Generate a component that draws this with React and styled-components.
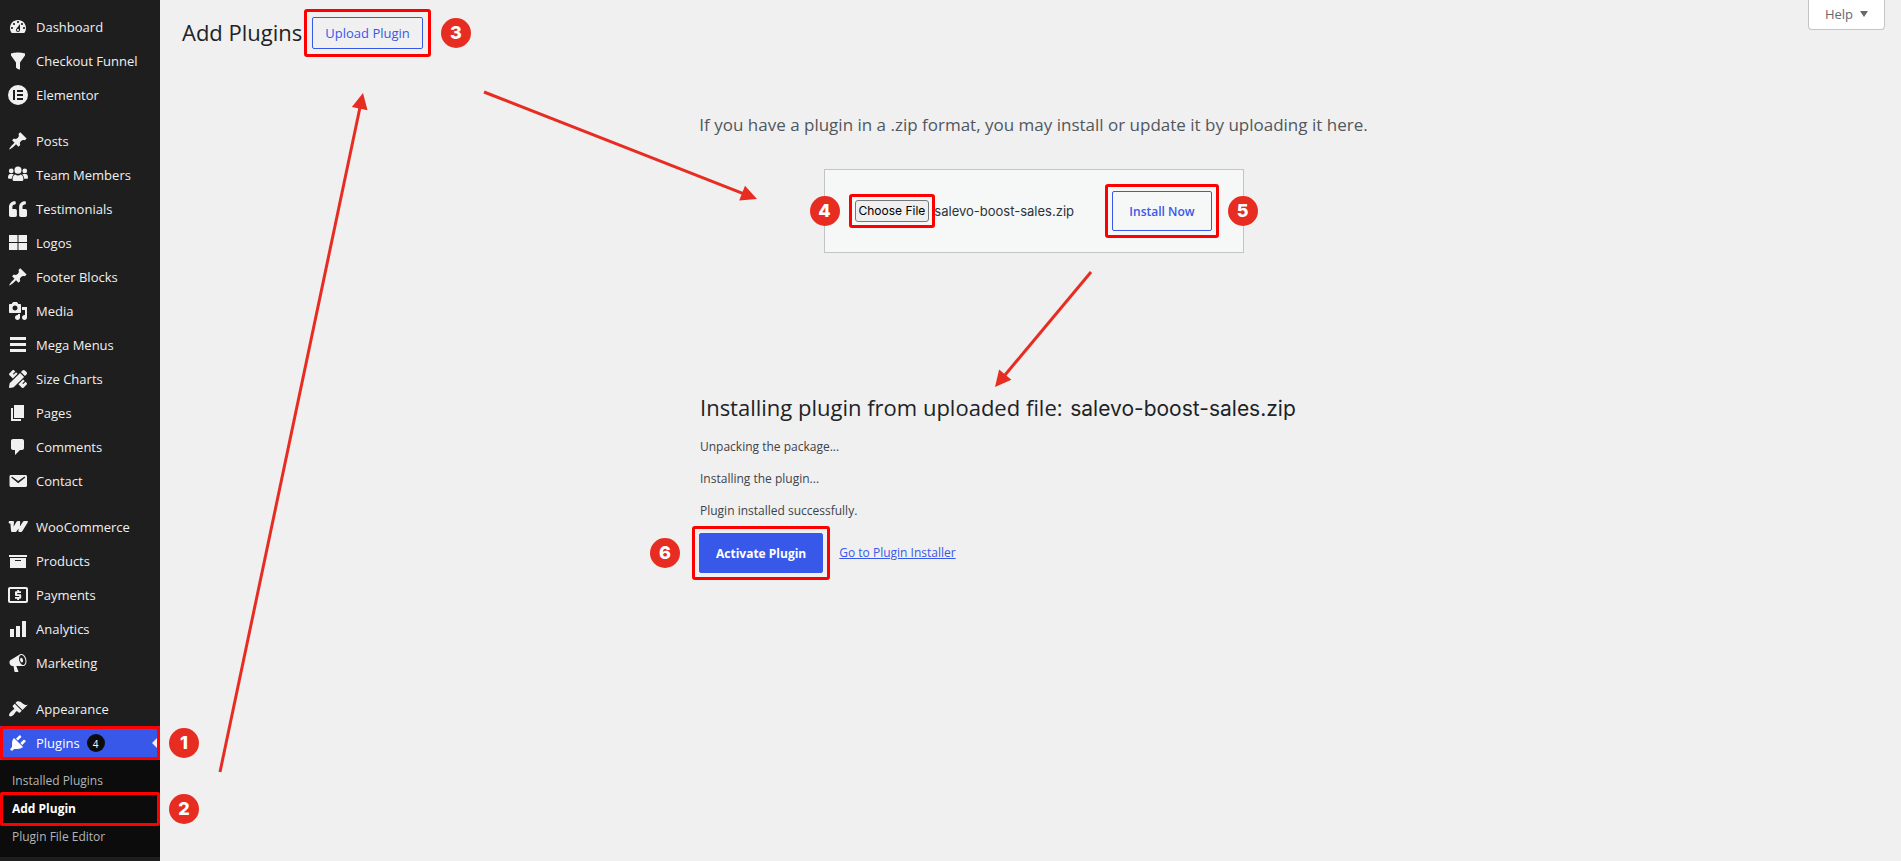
import React from "react";
import styled, { createGlobalStyle, css } from "styled-components";
import { FaQuoteLeft, FaPencilRuler } from "react-icons/fa";

const SANS = '"Open Sans", "Noto Sans", sans-serif';
const GEO = 'Inter, "Liberation Sans", sans-serif';
const BLUE = "#3858e9";
const RED = "#fe0000";
const MARK = "#e72d22";

const GlobalStyle = createGlobalStyle`
  * { box-sizing: border-box; }
  body {
    margin: 0;
    background: #f0f0f0;
    color: #3c434a;
    font: 12px/20px ${SANS};
  }
  a { color: ${BLUE}; }
`;

const Shell = styled.div`
  position: relative;
  display: flex;
  min-height: 100vh;
`;

const Sidebar = styled.nav`
  flex: 0 0 160px;
  background: #1e1e1e;
  padding-top: 10px;
`;

const MenuList = styled.ul`
  list-style: none;
  margin: 0;
  padding: 0;
`;

const MenuGroup = styled(MenuList)`
  & + & {
    margin-top: 12px;
  }
`;

const MenuLink = styled.a`
  position: relative;
  display: flex;
  align-items: center;
  height: 34px;
  color: ${(p) => (p.$active ? "#fff" : "#f0f0f1")};
  background: ${(p) => (p.$active ? BLUE : "transparent")};
  font-size: 13px;
  font-weight: 500;
  text-decoration: none;
`;

const IconBox = styled.span`
  display: flex;
  justify-content: center;
  width: 36px;
  svg {
    width: 20px;
    height: 20px;
    fill: currentColor;
  }
  svg[data-small] {
    width: 18px;
    height: 18px;
  }
`;

const Count = styled.span`
  display: grid;
  place-items: center;
  width: 18px;
  height: 18px;
  margin-left: 7px;
  border-radius: 50%;
  background: #0c0c0c;
  font-size: 10px;
`;

const Pointer = styled.span`
  position: absolute;
  right: 0;
  border: 8px solid transparent;
  border-right-color: #f0f0f0;
`;

const SubMenu = styled(MenuList)`
  padding: 7px 0 6px;
  background: #0c0c0c;
`;

const SubLink = styled.a`
  position: relative;
  display: flex;
  align-items: center;
  height: 28px;
  padding-left: 12px;
  color: ${(p) => (p.$current ? "#fff" : "#b5b5b5")};
  font-weight: ${(p) => (p.$current ? 700 : 400)};
  text-decoration: none;
`;

const Outline = styled.span`
  position: absolute;
  inset: ${(p) => (p.$bleed ? "-3px 0" : "0")};
  border: 3px solid ${RED};
  border-radius: 2px;
`;

const badgeSpot = {
  row: css`left: 169px;`,
  left: css`left: -15px;`,
  right: css`right: -15px;`,
  before: css`left: -45px;`,
  after: css`right: -43px;`,
};

const Badge = styled.span`
  position: absolute;
  top: 50%;
  ${(p) => badgeSpot[p.$spot]}
  display: grid;
  place-items: center;
  width: 30px;
  height: 30px;
  margin-top: -15px;
  border-radius: 50%;
  background: ${MARK};
  color: #fff;
  font: 800 18px/30px ${GEO};
`;

const Main = styled.main`
  flex: 1;
  min-width: 0;
  padding: 0 16px 0 22px;
`;

const Header = styled.header`
  display: flex;
  align-items: flex-start;
`;

const Title = styled.h1`
  margin: 0;
  color: #1d2327;
  font: 400 22px/32px ${SANS};
  padding-top: 16px;
`;

const Callout = styled.div`
  position: relative;
  padding: ${(p) => p.$gap}px;
  border: 3px solid ${RED};
  border-radius: 3px;
`;

const HeaderCallout = styled(Callout)`
  margin: 9px auto 0 2px;
`;

const Button = styled.button`
  height: ${(p) => (p.$small ? 32 : 40)}px;
  padding: 0 ${(p) => (p.$small ? 12 : 16)}px;
  border: 1px solid ${BLUE};
  border-radius: 2px;
  background: ${(p) => (p.$primary ? BLUE : "transparent")};
  color: ${(p) => (p.$primary ? "#fff" : BLUE)};
  font-family: ${SANS};
  font-size: ${(p) => (p.$small ? 13 : 12)}px;
  font-weight: ${(p) => (p.$primary ? 700 : p.$small ? 500 : 600)};
  white-space: nowrap;
`;

const HelpButton = styled.button`
  display: flex;
  align-items: center;
  gap: 7px;
  height: 30px;
  padding: 0 16px 1px;
  border: 1px solid #c3c4c7;
  border-top: 0;
  border-radius: 0 0 4px 4px;
  background: #fff;
  color: #646970;
  font: 400 13px/20px ${SANS};
  svg {
    width: 8px;
    height: 6px;
    fill: #646970;
  }
`;

const UploadNote = styled.p`
  margin: 52px 0 28px;
  color: #50575e;
  font-size: 17px;
  line-height: 32px;
  text-align: center;
`;

const UploadForm = styled.form`
  position: relative;
  display: flex;
  align-items: center;
  width: 420px;
  height: 84px;
  margin: 0 auto;
  padding: 0 24px;
  border: 1px solid #c3c4c7;
  background: #f6f7f7;
`;

const FileLabel = styled.label`
  display: block;
  padding: 0 3px;
  border: 1px solid #767676;
  border-radius: 3px;
  background: #efefef;
  color: #000;
  font: 400 12px/20px ${GEO};
  white-space: nowrap;
`;

const FileInput = styled.input`
  position: absolute;
  width: 1px;
  height: 1px;
  opacity: 0;
`;

const FileName = styled.output`
  margin: 0 auto 0 -1px;
  color: #2c3338;
  font: 400 13px/20px ${GEO};
`;

const Result = styled.section`
  width: 667px;
  margin: 138px auto 0;
`;

const ResultTitle = styled.h2`
  margin: 0 0 12px;
  color: #1d2327;
  font: 400 22px/32px ${SANS};
  span {
    font-family: ${GEO};
    font-size: 21px;
    margin-left: 2px;
  }
`;

const Step = styled.p`
  margin: 0 0 12px;
`;

const Actions = styled.div`
  display: flex;
  align-items: center;
  gap: 9px;
  margin: -7px 0 0 -8px;
`;

const Arrows = styled.svg`
  position: absolute;
  top: 0;
  left: 0;
  width: 1200px;
  height: 800px;
  pointer-events: none;
  line {
    stroke: ${MARK};
    stroke-width: 3;
  }
  polygon {
    fill: ${MARK};
  }
`;

const PATHS = {
  dashboard:
    "M3.76 16h12.48c1.1-1.37 1.76-3.11 1.76-5 0-4.42-3.58-8-8-8s-8 3.58-8 8c0 1.89.66 3.63 1.76 5zM10 4c.55 0 1 .45 1 1s-.45 1-1 1-1-.45-1-1 .45-1 1-1zM6 6c.55 0 1 .45 1 1s-.45 1-1 1-1-.45-1-1 .45-1 1-1zm8 0c.55 0 1 .45 1 1s-.45 1-1 1-1-.45-1-1 .45-1 1-1zm-5.37 5.55L12 7v6c0 1.1-.9 2-2 2s-2-.9-2-2c0-.57.24-1.08.63-1.45zM4 10c.55 0 1 .45 1 1s-.45 1-1 1-1-.45-1-1 .45-1 1-1zm12 0c.55 0 1 .45 1 1s-.45 1-1 1-1-.45-1-1 .45-1 1-1zm-5 3c0-.55-.45-1-1-1s-1 .45-1 1 .45 1 1 1 1-.45 1-1z",
  filter: "M3 4.5v-2s3.34-1 7-1 7 1 7 1v2l-5 7.03v6.97s-1.22-.09-2.25-.59S8 16.5 8 16.5v-4.97z",
  elementor: "M10 0a10 10 0 1 0 0 20 10 10 0 0 0 0-20zM5 5h2v10H5zM9 5h6v2H9zM9 9h6v2H9zM9 13h6v2H9z",
  pin: "M10.44 3.02l1.82-1.82 6.36 6.35-1.83 1.82c-1.05-.68-2.48-.57-3.41.36l-.75.75c-.92.93-1.04 2.35-.35 3.41l-1.83 1.82-2.41-2.41-2.8 2.79c-.42.42-3.38 2.71-3.8 2.29s1.86-3.39 2.28-3.81l2.79-2.79L4.1 9.36l1.83-1.82c1.05.69 2.48.57 3.4-.36l.75-.75c.93-.92 1.05-2.35.36-3.41z",
  groups:
    "M10.5 1.2a3.7 3.7 0 1 1 0 7.4 3.7 3.7 0 0 1 0-7.4zM3.4 3.2a2.5 2.5 0 1 1 0 5 2.5 2.5 0 0 1 0-5zM17.6 3.2a2.5 2.5 0 1 1 0 5 2.5 2.5 0 0 1 0-5zM2.4 9h2.4c.5 0 1 .2 1.3.5C4.900 10.500 4.200 12 4 14H1.500C.5 14 0 13.400 0 12.500 0 10.500.9 9 2.400 9zM18.600 9h-2.400c-.5 0-1 .2-1.300.5 1.200 1 1.900 2.500 2.100 4.500h2.500c1 0 1.500-.6 1.500-1.500 0-2-.9-3.500-2.400-3.500zM7.500 9.500c.8.6 1.900.9 3 .9s2.200-.3 3-.9c1.800.6 2.700 2.600 2.700 5 0 1.200-.6 1.900-1.800 1.900H6.600c-1.200 0-1.800-.7-1.800-1.900 0-2.400.9-4.400 2.700-5z",
  grid: "M1 2h8.500v7H1zM10.500 2H19v7h-8.500zM1 10h8.500v7H1zM10.500 10H19v7h-8.500z",
  media:
    "M13 11V4c0-.55-.45-1-1-1h-1.670L9 1H5L3.670 3H2c-.55 0-1 .45-1 1v7c0 .55.45 1 1 1h10c.55 0 1-.45 1-1zM7 4.500c1.380 0 2.500 1.120 2.500 2.500S8.380 9.500 7 9.500 4.500 8.380 4.500 7 5.620 4.500 7 4.500zM14 6h5v10.500c0 1.380-1.120 2.500-2.500 2.500S14 17.880 14 16.500s1.120-2.500 2.500-2.500c.17 0 .34.02.5.05V9h-3V6zm-4 8.050V13h2v3.500c0 1.380-1.120 2.500-2.500 2.500S7 17.880 7 16.500 8.120 14 9.500 14c.17 0 .34.02.5.05z",
  bars: "M2 2h16v3H2zM2 8h16v3H2zM2 14h16v3H2z",
  page: "M6 15V2h10v13H6zm-1 1h8v2H3V5h2v11z",
  comment: "M5 2h9c1.100 0 2 .9 2 2v7c0 1.100-.9 2-2 2h-2l-5 5v-5H5c-1.100 0-2-.9-2-2V4c0-1.100.9-2 2-2z",
  mail: "M3 4h14.500c.9 0 1.500.6 1.500 1.500v9c0 .9-.6 1.500-1.500 1.500H3c-.9 0-1.500-.6-1.500-1.500v-9C1.500 4.600 2.100 4 3 4zM4 5.500L3.200 6.600l7 5.600 7.100-5.600-.8-1.100-6.300 4.400z",
  woo: "M1.500 4H5c.8 0 1.100.4 1 1.200l-.5 4.600 3-5c.4-.6.8-.8 1.400-.8h1.300c.8 0 1.100.4 1 1.200l-.3 4.300 2.700-4.300c.6-.9 1-1.200 1.900-1.200h2.700c.8 0 1 .6.600 1.300l-5.200 8.500c-.6.9-1.100 1.200-1.900 1.200h-1c-.9 0-1.300-.4-1.300-1.300l.1-2.300-1.500 2.400c-.5.8-1 1.200-1.800 1.200H4.500c-1 0-1.400-.5-1.500-1.500L2.400 6.500H1.500C.4 6.500.4 4 1.500 4z",
  archive: "M19 4v2H1V4h18zM2 7h16v10H2V7zm11 3V9H7v1h6z",
  payment:
    "M2 2h16c1.200 0 2 .8 2 2v12c0 1.200-.8 2-2 2H2c-1.200 0-2-.8-2-2V4c0-1.200.8-2 2-2zM2 4v12h16V4zM9.200 5h1.800v1.200h2V8H9.200v1.200H12c.8 0 1.200.4 1.200 1.200v2.200c0 .8-.4 1.200-1.200 1.200h-1V15H9.200v-1.200H7V12h4.200v-1H8.200C7.400 11 7 10.600 7 9.800V7.400c0-.8.4-1.200 1.200-1.200h1z",
  chart: "M18 18V2h-4v16h4zm-6 0V7H8v11h4zm-6 0v-8H2v8h4z",
  megaphone:
    "M18.150 5.940c.46 1.620.38 3.220-.02 4.480-.42 1.280-1.260 2.180-2.300 2.480-.16.06-.26.06-.4.06-.06.02-.12.02-.18.02-.06.02-.14.02-.22.02h-6.800l2.220 5.500c.02.14-.06.26-.14.34-.08.1-.24.16-.34.16H6.950c-.1 0-.26-.06-.34-.16-.08-.08-.16-.2-.14-.34l-1-5.500H4.250l-.02-.02c-.5.06-1.080-.18-1.540-.62s-.88-1.080-1.060-1.880c-.24-.8-.2-1.560-.02-2.200.18-.62.58-1.080 1.060-1.300l.02-.02 9-5.400c.1-.06.18-.1.24-.16.06-.04.14-.08.24-.12.16-.08.28-.12.5-.18 1.040-.3 2.240.1 3.220.98s1.840 2.240 2.260 3.860zm-2.580 5.980h-.02c.4-.1.74-.34 1.040-.7.58-.7.86-1.760.86-3.040 0-.64-.1-1.300-.28-1.980-.34-1.360-1.020-2.500-1.780-3.240s-1.680-1.100-2.460-.88c-.82.22-1.400.96-1.700 2-.32 1.040-.28 2.360.06 3.720.38 1.360 1 2.500 1.800 3.240.78.74 1.620 1.100 2.480.88zm-2.540-7.080c.22-.04.42-.02.62.04.38.16.76.48 1.020 1s.42 1.200.42 1.780c0 .3-.04.56-.12.8-.18.48-.44.84-.86.94-.34.1-.8-.06-1.140-.4s-.64-.86-.78-1.500c-.18-.62-.12-1.240.02-1.720s.48-.84.82-.94z",
  brush:
    "M14.480 11.060L7.410 3.990l1.500-1.500c.5-.56 2.300-.47 3.510.32 1.210.8 1.430 1.280 2.910 2.100 1.180.64 2.450 1.260 4.450.85zm-.71.71L6.700 4.700 4.930 6.470c-.39.39-.39 1.020 0 1.410l1.060 1.060c.39.39.39 1.030 0 1.420-.6.6-1.430 1.110-2.210 1.690-.35.26-.7.53-1.010.84C1.430 14.230.4 16.080 1.400 17.070c.99 1 2.840-.03 4.180-1.360.31-.31.58-.66.85-1.020.57-.78 1.080-1.610 1.690-2.210.39-.39 1.020-.39 1.410 0l1.060 1.060c.39.39 1.020.39 1.410 0z",
  plug: "M13.110 4.360L9.870 7.600 8 5.730l3.240-3.240c.35-.34 1.050-.2 1.560.32.52.51.66 1.210.31 1.550zm-8 1.770l.91-1.120 9.010 9.010-1.190.84c-.71.71-2.630 1.160-3.820 1.160H6.140L4.900 17.260c-.59.59-1.540.59-2.120 0-.59-.58-.59-1.530 0-2.120l1.240-1.240v-3.880c0-1.130.4-3.190 1.090-3.890zm7.260 3.970l3.240-3.240c.34-.35 1.040-.21 1.550.31.52.51.66 1.210.31 1.550l-3.240 3.250z",
};

function Icon({ name }) {
  if (name === "quote") return <FaQuoteLeft data-small />;
  if (name === "ruler") return <FaPencilRuler data-small />;
  return (
    <svg viewBox={name === "groups" ? "0 0 21 20" : "0 0 20 20"} fillRule="evenodd" aria-hidden="true">
      <path d={PATHS[name]} />
    </svg>
  );
}

const GROUPS = [
  [
    ["dashboard", "Dashboard"],
    ["filter", "Checkout Funnel"],
    ["elementor", "Elementor"],
  ],
  [
    ["pin", "Posts"],
    ["groups", "Team Members"],
    ["quote", "Testimonials"],
    ["grid", "Logos"],
    ["pin", "Footer Blocks"],
    ["media", "Media"],
    ["bars", "Mega Menus"],
    ["ruler", "Size Charts"],
    ["page", "Pages"],
    ["comment", "Comments"],
    ["mail", "Contact"],
  ],
  [
    ["woo", "WooCommerce"],
    ["archive", "Products"],
    ["payment", "Payments"],
    ["chart", "Analytics"],
    ["megaphone", "Marketing"],
  ],
];

function MenuItem({ icon, label }) {
  return (
    <li>
      <MenuLink href="#">
        <IconBox><Icon name={icon} /></IconBox>
        {label}
      </MenuLink>
    </li>
  );
}

function Arrow({ from, to }) {
  const angle = (Math.atan2(to[1] - from[1], to[0] - from[0]) * 180) / Math.PI;
  const length = Math.hypot(to[0] - from[0], to[1] - from[1]);
  return (
    <g transform={`translate(${to[0]} ${to[1]}) rotate(${angle})`}>
      <line x1={-length} y1="0" x2="-14" y2="0" />
      <polygon points="0,0 -16,-8 -16,8" />
    </g>
  );
}

export default function App() {
  return (
    <Shell>
      <GlobalStyle />
      <Sidebar aria-label="Main menu">
        {GROUPS.map((items, i) => (
          <MenuGroup key={i}>
            {items.map(([icon, label]) => (
              <MenuItem key={label} icon={icon} label={label} />
            ))}
          </MenuGroup>
        ))}
        <MenuGroup>
          <MenuItem icon="brush" label="Appearance" />
          <li>
            <MenuLink href="#" $active>
              <IconBox><Icon name="plug" /></IconBox>
              Plugins
              <Count>4</Count>
              <Pointer />
              <Outline />
              <Badge $spot="row">1</Badge>
            </MenuLink>
            <SubMenu>
              <li><SubLink href="#">Installed Plugins</SubLink></li>
              <li>
                <SubLink href="#" $current>
                  Add Plugin
                  <Outline $bleed />
                  <Badge $spot="row">2</Badge>
                </SubLink>
              </li>
              <li><SubLink href="#">Plugin File Editor</SubLink></li>
            </SubMenu>
          </li>
        </MenuGroup>
      </Sidebar>

      <Main>
        <Header>
          <Title>Add Plugins</Title>
          <HeaderCallout $gap={5}>
            <Button type="button" $small>Upload Plugin</Button>
            <Badge $spot="after">3</Badge>
          </HeaderCallout>
          <HelpButton type="button">
            Help
            <svg viewBox="0 0 8 6" aria-hidden="true"><path d="M0 0h8L4 6z" /></svg>
          </HelpButton>
        </Header>

        <UploadNote>
          If you have a plugin in a .zip format, you may install or update it by uploading it here.
        </UploadNote>
        <UploadForm onSubmit={(e) => e.preventDefault()}>
          <Callout $gap={3}>
            <FileInput type="file" id="pluginzip" accept=".zip" />
            <FileLabel htmlFor="pluginzip">Choose File</FileLabel>
          </Callout>
          <FileName htmlFor="pluginzip">salevo-boost-sales.zip</FileName>
          <Callout $gap={4}>
            <Button type="submit">Install Now</Button>
          </Callout>
          <Badge $spot="left">4</Badge>
          <Badge $spot="right">5</Badge>
        </UploadForm>

        <Result>
          <ResultTitle>
            Installing plugin from uploaded file: <span>salevo-boost-sales.zip</span>
          </ResultTitle>
          <Step>Unpacking the package...</Step>
          <Step>Installing the plugin...</Step>
          <Step>Plugin installed successfully.</Step>
          <Actions>
            <Callout $gap={4}>
              <Button type="button" $primary>Activate Plugin</Button>
              <Badge $spot="before">6</Badge>
            </Callout>
            <a href="#">Go to Plugin Installer</a>
          </Actions>
        </Result>
      </Main>

      <Arrows aria-hidden="true">
        <Arrow from={[220, 772]} to={[363, 93]} />
        <Arrow from={[484, 92]} to={[757, 199]} />
        <Arrow from={[1091, 272]} to={[995, 387]} />
      </Arrows>
    </Shell>
  );
}
